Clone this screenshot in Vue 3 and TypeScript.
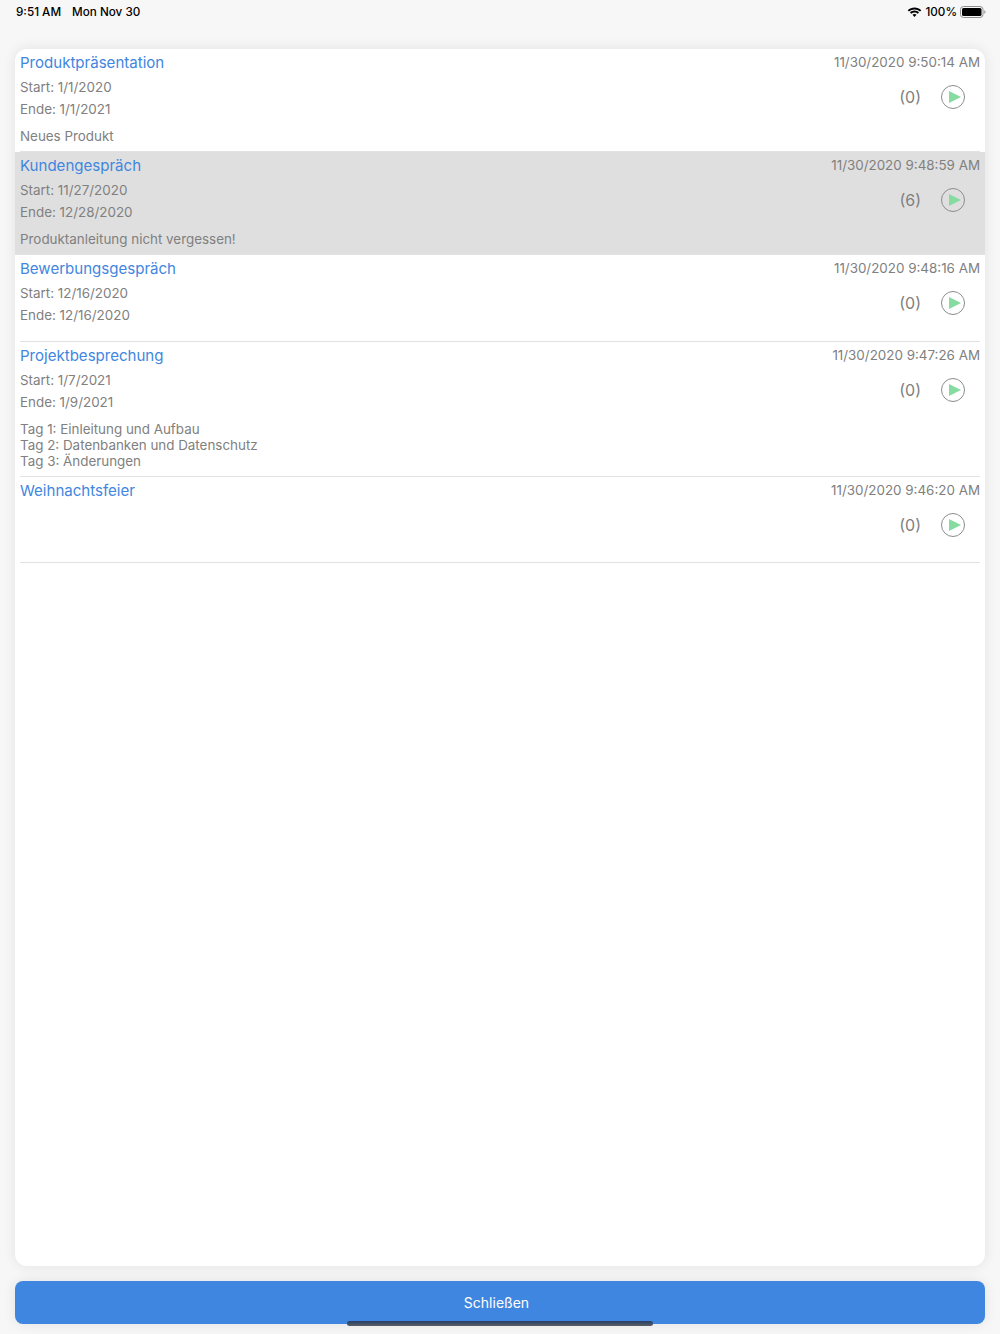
<script setup lang="ts">
interface Item {
  title: string
  stamp: string
  start?: string
  end?: string
  notes: string[]
  count: number
  selected?: boolean
}

const items: Item[] = [
  { title: 'Produktpräsentation', stamp: '11/30/2020 9:50:14 AM', start: '1/1/2020', end: '1/1/2021', notes: ['Neues Produkt'], count: 0 },
  { title: 'Kundengespräch', stamp: '11/30/2020 9:48:59 AM', start: '11/27/2020', end: '12/28/2020', notes: ['Produktanleitung nicht vergessen!'], count: 6, selected: true },
  { title: 'Bewerbungsgespräch', stamp: '11/30/2020 9:48:16 AM', start: '12/16/2020', end: '12/16/2020', notes: [], count: 0 },
  { title: 'Projektbesprechung', stamp: '11/30/2020 9:47:26 AM', start: '1/7/2021', end: '1/9/2021', notes: ['Tag 1: Einleitung und Aufbau', 'Tag 2: Datenbanken und Datenschutz', 'Tag 3: Änderungen'], count: 0 },
  { title: 'Weihnachtsfeier', stamp: '11/30/2020 9:46:20 AM', notes: [], count: 0 },
]
</script>

<template>
  <div class="page">
    <header class="status">
      <div class="status-left">
        <span>9:51 AM</span>
        <span>Mon Nov 30</span>
      </div>
      <div class="status-right">
        <svg width="15" height="11" viewBox="0 0 15 11">
          <path d="M7.5 2.4c2.100 0 4 .8 5.500 2.200l1.300-1.400C12.400 1.400 10 .4 7.500.4S2.600 1.400.7 3.200L2 4.600c1.500-1.400 3.400-2.200 5.500-2.200z" fill="#000" />
          <path d="M7.500 5.500c1.200 0 2.300.5 3.200 1.300L12 5.400C10.800 4.300 9.200 3.600 7.500 3.600S4.200 4.300 3 5.400l1.300 1.400c.9-.8 2-1.300 3.200-1.300z" fill="#000" />
          <path d="M7.500 6.900c-.8 0-1.500.3-2 .8l2 2.400 2-2.400c-.5-.5-1.200-.8-2-.8z" fill="#000" />
        </svg>
        <span>100%</span>
        <svg width="26" height="12" viewBox="0 0 26 12">
          <rect x="0.500" y="0.500" width="22.500" height="11" rx="3" fill="none" stroke="#8e8e8e" />
          <rect x="2" y="2" width="19.500" height="8" rx="1.500" fill="#000" />
          <path d="M24.300 4.200c.8.300 1.200 1 1.200 1.800s-.4 1.500-1.200 1.800z" fill="#8e8e8e" />
        </svg>
      </div>
    </header>

    <main class="card">
      <article v-for="item in items" :key="item.title" class="row" :class="{ selected: item.selected }">
        <div class="info">
          <h2 class="title">{{ item.title }}</h2>
          <div class="dates">
            <template v-if="item.start">
              <p class="date">Start: {{ item.start }}</p>
              <p class="date">Ende: {{ item.end }}</p>
            </template>
          </div>
          <div class="notes">
            <p v-for="note in item.notes" :key="note" class="note">{{ note }}</p>
          </div>
        </div>
        <div class="side">
          <div class="stamp">{{ item.stamp }}</div>
          <div class="actions">
            <span class="count">({{ item.count }})</span>
            <svg class="play" width="26" height="26" viewBox="0 0 26 26">
              <circle cx="13" cy="13" r="11.500" fill="none" stroke="#8c8c8c" stroke-width="1" />
              <path d="M9 7l12 6-12 6z" fill="#86dba0" />
            </svg>
          </div>
        </div>
      </article>
    </main>

    <button class="close" type="button">Schließen</button>
    <div class="home"></div>
  </div>
</template>

<style>
html, body {
  margin: 0;
  background: #f7f7f7;
}
</style>

<style scoped>
.page {
  position: relative;
  box-sizing: border-box;
  height: 1334px;
  padding: 0 15px 10px;
  display: flex;
  flex-direction: column;
  background: #f7f7f7;
  font-family: Inter, "Liberation Sans", sans-serif;
  overflow: hidden;
}

.status {
  height: 49px;
  flex: none;
  margin: 0 0 0 1px;
  display: flex;
  justify-content: space-between;
  align-items: flex-start;
  font-size: 11.700px;
  font-weight: 500;
  line-height: 24px;
  color: #000;
}

.status-left {
  display: flex;
  gap: 11px;
}

.status-right {
  display: flex;
  align-items: center;
  height: 24px;
  gap: 3px;
  margin-right: -1px;
}

.card {
  flex: 1;
  background: #fff;
  border-radius: 12px;
  box-shadow: 0 0 14px rgba(0, 0, 0, 0.09);
  overflow: hidden;
}

.row {
  position: relative;
  display: flex;
  justify-content: space-between;
  padding: 0 5px 8px;
  color: #808080;
}

.row::after {
  content: "";
  position: absolute;
  left: 5px;
  right: 5px;
  bottom: 0;
  height: 1px;
  background: #e2e2e2;
}

.row.selected {
  background: #dfdfdf;
}

.row.selected::after {
  left: 0;
  right: 0;
}

.title {
  margin: 0;
  padding-top: 1px;
  font-size: 15.050px;
  font-weight: 400;
  line-height: 26px;
  color: #3f86e0;
}

.dates {
  min-height: 44px;
}

.date {
  margin: 0;
  font-size: 13.400px;
  line-height: 22px;
}

.notes {
  margin-top: 8px;
}

.notes:empty {
  margin-top: 7.500px;
}

.note {
  margin: 0;
  font-size: 13.400px;
  line-height: 16px;
}

.side {
  display: flex;
  flex-direction: column;
  align-items: flex-end;
}

.stamp {
  padding-top: 1px;
  font-size: 13.400px;
  line-height: 25px;
}

.actions {
  display: flex;
  align-items: center;
  gap: 20px;
  height: 26px;
  margin-top: 9px;
  margin-right: 14px;
}

.count {
  margin-right: -1px;
  font-size: 16px;
}

.close {
  flex: none;
  height: 43px;
  margin-top: 15px;
  border: 0;
  border-radius: 8px;
  background: #3f86e0;
  color: #fff;
  font: inherit;
  font-size: 14px;
  padding: 0 7px 0 0;
  box-shadow: 0 0 14px rgba(0, 0, 0, 0.09);
}

.home {
  position: absolute;
  left: 347px;
  top: 1321px;
  width: 306px;
  height: 5px;
  border-radius: 3px;
  background: linear-gradient(#243f68, #5a5f66);
}
</style>
